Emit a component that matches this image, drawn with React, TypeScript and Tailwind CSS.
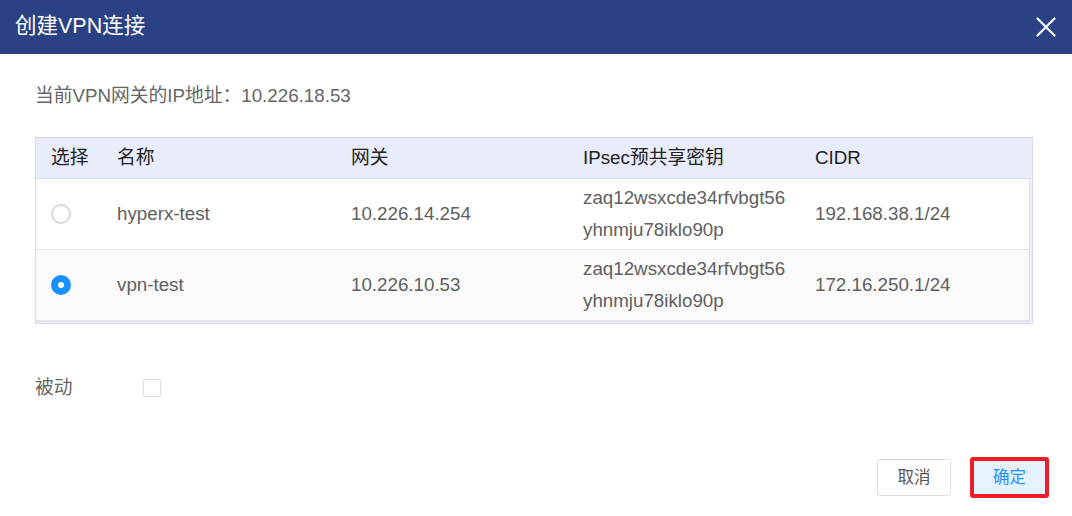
import React from "react";

const font = { fontFamily: '"Liberation Sans", "Noto Sans CJK SC", sans-serif' };

const rows = [
    { name: "hyperx-test", gw: "10.226.14.254", cidr: "192.168.38.1/24", checked: false },
    { name: "vpn-test", gw: "10.226.10.53", cidr: "172.16.250.1/24", checked: true },
];

const cols = "grid grid-cols-[66px_234px_232px_232px_1fr]";

function Radio({ checked }: { checked: boolean }) {
    if (checked) {
        return (
            <span className="flex items-center justify-center w-[20px] h-[20px] rounded-full bg-[#1890ff]">
                <span className="w-[6px] h-[6px] rounded-full bg-white" />
            </span>
        );
    }
    return <span className="block w-[20px] h-[20px] rounded-full border-2 border-[#d4d7de] bg-white" />;
}

export default function App() {
    return (
        <div style={font} className="w-[1072px] h-[516px] bg-white overflow-hidden">
            {/* title bar */}
            <div className="flex items-center justify-between h-[54px] bg-[#2a4283] pl-[15px] pr-[16px]">
                <div className="text-white text-[21.5px] leading-none">创建VPN连接</div>
                <svg width="20" height="20" viewBox="0 0 20 20">
                    <path d="M1.5 1.5 L18.5 18.5 M18.5 1.5 L1.5 18.5" stroke="#fff" strokeWidth="2.2" strokeLinecap="round" />
                </svg>
            </div>

            <div className="px-[35px]">
                <div className="pt-[28px] text-[18.75px] leading-[28px] text-[#666]">当前VPN网关的IP地址：10.226.18.53</div>

                {/* table */}
                <div className="mt-[27px] w-[998px] border border-[#d6dbe6] bg-[#eef0f7]">
                    <div className={cols + " h-[41px] items-center bg-[#e8ecfb] border-b border-[#d6dbe6] text-[18.75px] text-[#222]"}>
                        <div className="pl-[15px]">选择</div>
                        <div className="pl-[15px]">名称</div>
                        <div className="pl-[15px]">网关</div>
                        <div className="pl-[15px]">IPsec预共享密钥</div>
                        <div className="pl-[15px]">CIDR</div>
                    </div>
                    <div className="mr-[2px] mb-[1px] border-r border-b border-[#dfe2ea]">
                        {rows.map((r, i) => (
                            <div
                                key={r.name}
                                className={cols + " h-[71px] items-center text-[18.75px] text-[#606060] border-b border-[#e6e6e6] " + (i === 0 ? "bg-white" : "bg-[#fafafa]")}
                            >
                                <div className="pl-[15px]"><Radio checked={r.checked} /></div>
                                <div className="pl-[15px]">{r.name}</div>
                                <div className="pl-[15px]">{r.gw}</div>
                                <div className="pl-[15px] leading-[32px]">
                                    <div>zaq12wsxcde34rfvbgt56</div>
                                    <div>yhnmju78iklo90p</div>
                                </div>
                                <div className="pl-[15px]">{r.cidr}</div>
                            </div>
                        ))}
                    </div>
                </div>

                {/* passive */}
                <div className="flex items-center mt-[50px] h-[28px]">
                    <div className="w-[108px] text-[18.75px] text-[#666]">被动</div>
                    <span className="block w-[18px] h-[18px] rounded-[3px] border border-[#dcdfe6] bg-white" />
                </div>
            </div>

            {/* footer buttons */}
            <div className="flex items-center justify-end mt-[55px] pr-[23px] gap-[19px]">
                <div className="flex items-center justify-center w-[74px] h-[37px] rounded-[3px] border border-[#dcdfe6] text-[16.5px] text-[#555]">取消</div>
                <div className="flex items-center justify-center w-[79px] h-[41px] rounded-[3px] border-4 border-[#ee1c25] bg-[#e6f2ff] text-[16.5px] text-[#1890ff]">确定</div>
            </div>
        </div>
    );
}
